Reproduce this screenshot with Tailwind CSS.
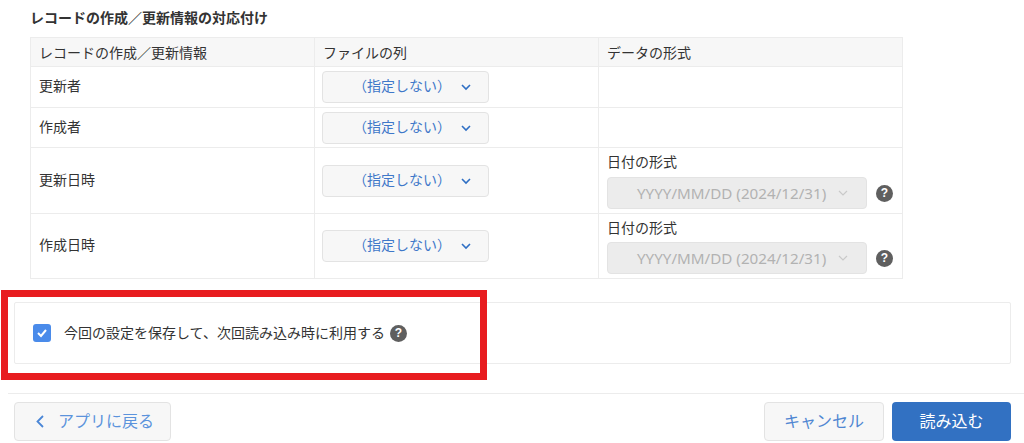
<!DOCTYPE html>
<html lang="ja">
  <head>
    <meta charset="UTF-8" />
    <title>レコードの作成／更新情報の対応付け</title>
    <script src="https://cdn.jsdelivr.net/npm/@tailwindcss/browser@4"></script>
  </head>
  <body class="relative bg-white h-[443px] overflow-hidden font-['Noto_Sans_CJK_JP','Liberation_Sans',sans-serif] text-[14px] text-[#333]">
    <div class="pl-[30px] pt-[9px]">
      <h2 class="h-[17px] leading-[17px] text-[14px] font-bold">レコードの作成／更新情報の対応付け</h2>

      <!-- Mapping table -->
      <div class="mt-[11px] w-[873px] border-t border-l border-[#ececec]">
        <div class="grid grid-cols-[284px_284px_304px] h-[29px] bg-[#f7f7f7]">
          <div class="flex items-center pl-2 border-r border-b border-[#ececec]">レコードの作成／更新情報</div>
          <div class="flex items-center pl-2 border-r border-b border-[#ececec]">ファイルの列</div>
          <div class="flex items-center pl-2 border-r border-b border-[#ececec]">データの形式</div>
        </div>

        <div class="grid grid-cols-[284px_284px_304px] h-[41px]">
          <div class="flex items-center pl-2 pb-[3px] border-r border-b border-[#ececec]">更新者</div>
          <div class="flex items-center pl-[7px] border-r border-b border-[#ececec]">
            <div class="flex items-center w-[167px] h-[32px] rounded-[4px] border border-[#e3e3e3] bg-[#f7f7f7] text-[#3f78c9]">
              <span class="ml-[30px] w-[105px] pb-[3px]">（指定しない）</span>
              <svg class="ml-[2px]" width="12" height="8" viewBox="0 0 12 8" fill="none" stroke="#2f6fc4" stroke-width="1.6"><path d="M2 2l4 4 4-4" /></svg>
            </div>
          </div>
          <div class="border-r border-b border-[#ececec]"></div>
        </div>

        <div class="grid grid-cols-[284px_284px_304px] h-[40px]">
          <div class="flex items-center pl-2 pb-[3px] border-r border-b border-[#ececec]">作成者</div>
          <div class="flex items-center pl-[7px] border-r border-b border-[#ececec]">
            <div class="flex items-center w-[167px] h-[32px] rounded-[4px] border border-[#e3e3e3] bg-[#f7f7f7] text-[#3f78c9]">
              <span class="ml-[30px] w-[105px] pb-[3px]">（指定しない）</span>
              <svg class="ml-[2px]" width="12" height="8" viewBox="0 0 12 8" fill="none" stroke="#2f6fc4" stroke-width="1.6"><path d="M2 2l4 4 4-4" /></svg>
            </div>
          </div>
          <div class="border-r border-b border-[#ececec]"></div>
        </div>

        <div class="grid grid-cols-[284px_284px_304px] h-[66px]">
          <div class="flex items-center pl-2 pb-[3px] border-r border-b border-[#ececec]">更新日時</div>
          <div class="flex items-center pl-[7px] border-r border-b border-[#ececec]">
            <div class="flex items-center w-[167px] h-[32px] rounded-[4px] border border-[#e3e3e3] bg-[#f7f7f7] text-[#3f78c9]">
              <span class="ml-[30px] w-[105px] pb-[3px]">（指定しない）</span>
              <svg class="ml-[2px]" width="12" height="8" viewBox="0 0 12 8" fill="none" stroke="#2f6fc4" stroke-width="1.6"><path d="M2 2l4 4 4-4" /></svg>
            </div>
          </div>
          <div class="pl-2 pt-[3px] border-r border-b border-[#ececec]">
            <div class="h-[20px] leading-[20px]">日付の形式</div>
            <div class="mt-[6px] flex items-center">
              <div class="flex items-center w-[260px] h-[32px] rounded-[4px] border border-[#e3e3e3] bg-[#ececec] text-[#b2b2b2]">
                <span class="ml-[29px] w-[200px] font-['Noto_Sans','Noto_Sans_CJK_JP',sans-serif] text-[15.2px] whitespace-nowrap">YYYY/MM/DD (2024/12/31)</span>
                <svg width="12" height="8" viewBox="0 0 12 8" fill="none" stroke="#c9c9c9" stroke-width="1.2"><path d="M2 2l4 4 4-4" /></svg>
              </div>
              <span class="ml-[9px] flex items-center justify-center w-[17px] h-[17px] rounded-full bg-[#5f5f5f] text-white text-[12px] font-bold leading-none font-['Liberation_Sans',sans-serif]">?</span>
            </div>
          </div>
        </div>

        <div class="grid grid-cols-[284px_284px_304px] h-[65px]">
          <div class="flex items-center pl-2 pb-[3px] border-r border-b border-[#ececec]">作成日時</div>
          <div class="flex items-center pl-[7px] border-r border-b border-[#ececec]">
            <div class="flex items-center w-[167px] h-[32px] rounded-[4px] border border-[#e3e3e3] bg-[#f7f7f7] text-[#3f78c9]">
              <span class="ml-[30px] w-[105px] pb-[3px]">（指定しない）</span>
              <svg class="ml-[2px]" width="12" height="8" viewBox="0 0 12 8" fill="none" stroke="#2f6fc4" stroke-width="1.6"><path d="M2 2l4 4 4-4" /></svg>
            </div>
          </div>
          <div class="pl-2 pt-[3px] border-r border-b border-[#ececec]">
            <div class="h-[20px] leading-[20px]">日付の形式</div>
            <div class="mt-[5px] flex items-center">
              <div class="flex items-center w-[260px] h-[32px] rounded-[4px] border border-[#e3e3e3] bg-[#ececec] text-[#b2b2b2]">
                <span class="ml-[29px] w-[200px] font-['Noto_Sans','Noto_Sans_CJK_JP',sans-serif] text-[15.2px] whitespace-nowrap">YYYY/MM/DD (2024/12/31)</span>
                <svg width="12" height="8" viewBox="0 0 12 8" fill="none" stroke="#c9c9c9" stroke-width="1.2"><path d="M2 2l4 4 4-4" /></svg>
              </div>
              <span class="ml-[9px] flex items-center justify-center w-[17px] h-[17px] rounded-full bg-[#5f5f5f] text-white text-[12px] font-bold leading-none font-['Liberation_Sans',sans-serif]">?</span>
            </div>
          </div>
        </div>
      </div>
    </div>

    <!-- Save settings card -->
    <div class="ml-[14px] mt-[23px] flex items-center w-[997px] h-[62px] pl-[18px] rounded-[2px] border border-[#ececec]">
      <span class="flex items-center justify-center w-[18px] h-[18px] rounded-[3px] bg-[#4a8bea]">
        <svg width="12" height="10" viewBox="0 0 12 10" fill="none" stroke="#fff" stroke-width="2"><path d="M2 5l3 3 5-6" /></svg>
      </span>
      <span class="ml-[13px] pb-[1px]">今回の設定を保存して、次回読み込み時に利用する</span>
      <span class="ml-[5px] flex items-center justify-center w-[17px] h-[17px] rounded-full bg-[#5f5f5f] text-white text-[12px] font-bold leading-none font-['Liberation_Sans',sans-serif]">?</span>
    </div>

    <!-- Footer -->
    <div class="ml-[8px] mt-[29px] flex justify-between pl-[6px] pr-[13px] pt-[8px] border-t border-[#ececec]">
      <button class="flex items-center w-[157px] h-[39px] pl-[20px] rounded-[4px] border border-[#e3e3e3] bg-[#f7f7f7] text-[16px] text-[#5b93dc]">
        <svg width="10" height="15" viewBox="0 0 10 15" fill="none" stroke="#4a86d6" stroke-width="1.8"><path d="M8 2L2.5 7.5 8 13" /></svg>
        <span class="ml-[13px] pb-[3px]">アプリに戻る</span>
      </button>
      <div class="flex gap-[8px]">
        <button class="w-[120px] h-[39px] pb-[3px] rounded-[4px] border border-[#e3e3e3] bg-[#f7f7f7] text-[16px] text-[#4f86d2]">キャンセル</button>
        <button class="w-[119px] h-[39px] pb-[3px] rounded-[4px] bg-[#3271c2] text-[16px] text-white">読み込む</button>
      </div>
    </div>

    <!-- Red annotation frame -->
    <div class="absolute left-[1px] top-[290px] w-[486px] h-[90px] border-[7px] border-[#e81c1f]"></div>
  </body>
</html>
